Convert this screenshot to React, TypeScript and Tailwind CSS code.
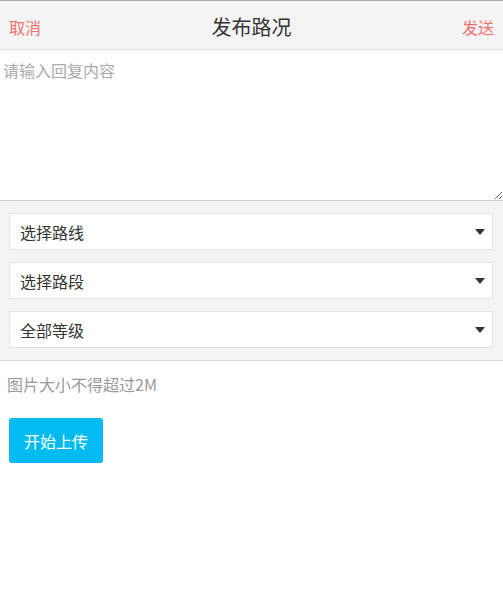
import React from "react";

const selects = ["选择路线", "选择路段", "全部等级"];

function SelectBox({ label }: { label: string }) {
  return (
    <div className="flex h-[37px] items-center justify-between border border-[#e3e3e3] bg-white pl-[10px] pr-[7px]">
      <span className="text-[16px] text-[#333]">{label}</span>
      <svg width="10" height="6" viewBox="0 0 10 6" className="mt-[1px]">
        <polygon points="0,0 10,0 5,6" fill="#333" />
      </svg>
    </div>
  );
}

export default function App() {
  return (
    <div
      className="min-h-[608px] w-full bg-white"
      style={{ fontFamily: '"Noto Sans CJK SC", "Noto Sans", sans-serif' }}
    >
      {/* Header */}
      <div className="flex h-[50px] items-center justify-between border-t border-b border-t-[#aaa] border-b-[#ddd] bg-[#f4f4f4] px-[9px] pt-[3px]">
        <button className="text-[16px] text-[#f07070]">取消</button>
        <h1 className="text-[20px] text-[#333]">发布路况</h1>
        <button className="text-[16px] text-[#f07070]">发送</button>
      </div>

      {/* Content */}
      <textarea
        className="block h-[151px] w-full border-b border-[#ccc] px-[3px] pt-[8px] text-[16px] text-[#333] outline-none placeholder:text-[#aaa]"
        placeholder="请输入回复内容"
      />

      {/* Options */}
      <div className="flex flex-col gap-[12px] border-b border-[#ddd] bg-[#f4f4f4] py-[12px] pl-[9px] pr-[10px]">
        {selects.map((s) => (
          <SelectBox key={s} label={s} />
        ))}
      </div>

      {/* Upload */}
      <div className="px-[7px] pt-[11px]">
        <p className="text-[16px] text-[#999]">图片大小不得超过2M</p>
        <button className="mt-[22px] ml-[2px] h-[45px] w-[94px] rounded-[3px] bg-[#00bbf0] text-[16px] text-white">
          开始上传
        </button>
      </div>
    </div>
  );
}
